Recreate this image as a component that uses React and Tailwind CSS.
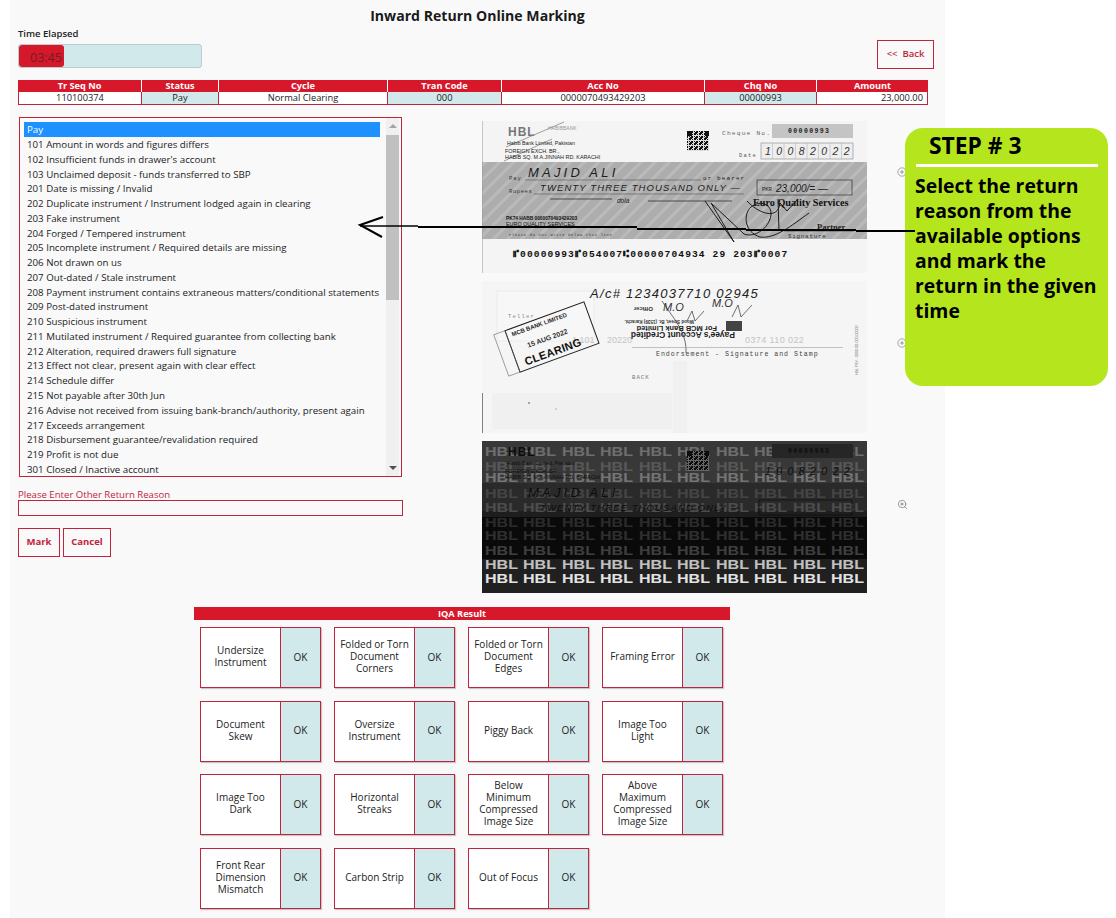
import React from "react";
import { CirclePlus, ZoomIn } from "lucide-react";

const reasons = [
  "101 Amount in words and figures differs",
  "102 Insufficient funds in drawer's account",
  "103 Unclaimed deposit - funds transferred to SBP",
  "201 Date is missing / Invalid",
  "202 Duplicate instrument / Instrument lodged again in clearing",
  "203 Fake instrument",
  "204 Forged / Tempered instrument",
  "205 Incomplete instrument / Required details are missing",
  "206 Not drawn on us",
  "207 Out-dated / Stale instrument",
  "208 Payment instrument contains extraneous matters/conditional statements",
  "209 Post-dated instrument",
  "210 Suspicious instrument",
  "211 Mutilated instrument / Required guarantee from collecting bank",
  "212 Alteration, required drawers full signature",
  "213 Effect not clear, present again with clear effect",
  "214 Schedule differ",
  "215 Not payable after 30th Jun",
  "216 Advise not received from issuing bank-branch/authority, present again",
  "217 Exceeds arrangement",
  "218 Disbursement guarantee/revalidation required",
  "219 Profit is not due",
  "301 Closed / Inactive account",
];

const iqa = [
  ["Undersize", "Instrument"],
  ["Folded or Torn", "Document", "Corners"],
  ["Folded or Torn", "Document", "Edges"],
  ["Framing Error"],
  ["Document", "Skew"],
  ["Oversize", "Instrument"],
  ["Piggy Back"],
  ["Image Too", "Light"],
  ["Image Too", "Dark"],
  ["Horizontal", "Streaks"],
  ["Below", "Minimum", "Compressed", "Image Size"],
  ["Above", "Maximum", "Compressed", "Image Size"],
  ["Front Rear", "Dimension", "Mismatch"],
  ["Carbon Strip"],
  ["Out of Focus"],
];

const columns = [
  { h: "Tr Seq No", v: "110100374", w: "w-[123px]" },
  { h: "Status", v: "Pay", w: "w-[77px]", tint: true },
  { h: "Cycle", v: "Normal Clearing", w: "w-[169px]" },
  { h: "Tran Code", v: "000", w: "w-[114px]", tint: true },
  { h: "Acc No", v: "0000070493429203", w: "w-[203px]" },
  { h: "Chq No", v: "00000993", w: "w-[112px]", tint: true },
  { h: "Amount", v: "23,000.00", w: "w-[112px]", right: true },
];

const MONO = "'Liberation Mono', monospace";
const SANS = "'Liberation Sans', sans-serif";
const SERIF = "'Liberation Serif', serif";

function QR({ x, y, dark = "#111", light = "#ddd" }) {
  const cells = [];
  for (let r = 0; r < 20; r++) {
    for (let c = 0; c < 22; c++) {
      const on = ((r * 7 + c * 13 + r * c * 3) % 5) < 3 || (r < 5 && c < 5) || (r < 5 && c > 17);
      cells.push(<rect key={r + "-" + c} x={x + c} y={y + r} width="1" height="1" fill={on ? dark : light} />);
    }
  }
  return <g>{cells}</g>;
}

function ChequeFront() {
  return (
    <svg width="385" height="152" viewBox="0 0 385 152" className="block">
      <defs>
        <pattern id="diag" width="10" height="10" patternUnits="userSpaceOnUse" patternTransform="rotate(-45)">
          <rect width="10" height="10" fill="#adadad" />
          <rect width="10" height="3" fill="#bababa" />
        </pattern>
      </defs>
      <rect width="385" height="152" fill="#f4f4f4" />
      <rect y="41" width="385" height="77" fill="url(#diag)" />
      <text x="26" y="15" fontFamily={SANS} fontWeight="700" fontSize="12" letterSpacing="1" fill="#777">HBL</text>
      <text x="66" y="9" fontFamily={SANS} fontSize="5" fill="#999">HABIBBANK</text>
      <path d="M24 26L82 1M22 40L70 18" stroke="#888" strokeWidth="0.8" fill="none" />
      <text x="25" y="24" fontFamily={SANS} fontSize="5.2" fill="#222">Habib Bank Limited, Pakistan</text>
      <text x="23" y="32" fontFamily={SANS} fontSize="5.4" fill="#222">FOREIGN EXCH. BR.,</text>
      <text x="23" y="38" fontFamily={SANS} fontSize="5.4" fill="#222">HABIB SQ. M.A.JINNAH RD. KARACHI</text>
      <QR x={205} y={10} />
      <text x="240" y="14" fontFamily={MONO} fontSize="6.2" letterSpacing="1.2" fill="#666">Cheque No.</text>
      <rect x="290" y="3" width="81" height="14" fill="#c4c4c4" />
      <text x="306" y="12" fontFamily={MONO} fontWeight="700" fontSize="6.5" letterSpacing="1.4" fill="#222">00000993</text>
      <text x="257" y="36" fontFamily={MONO} fontSize="5.5" letterSpacing="1.2" fill="#555">Date</text>
      <rect x="279" y="22" width="92" height="16" fill="#eee" stroke="#888" strokeWidth="0.6" />
      {[1, 2, 3, 4, 5, 6, 7].map((i) => (
        <line key={i} x1={279 + i * 11.5} x2={279 + i * 11.5} y1="22" y2="38" stroke="#aaa" strokeWidth="0.5" />
      ))}
      <text x="283" y="34" fontFamily={SANS} fontStyle="italic" fontSize="10.5" letterSpacing="5.4" fill="#333">10082022</text>

      <text x="27" y="59" fontFamily={MONO} fontSize="5.5" letterSpacing="1" fill="#333">Pay</text>
      <text x="46" y="56" fontFamily={SANS} fontStyle="italic" fontSize="13" letterSpacing="3.2" fill="#1c1c1c">MAJID ALI</text>
      <line x1="43" y1="59" x2="219" y2="59" stroke="#555" strokeWidth="0.6" />
      <text x="221" y="59" fontFamily={MONO} fontSize="6" letterSpacing="1.1" fill="#222">or bearer</text>
      <text x="27" y="72" fontFamily={MONO} fontSize="5.5" letterSpacing="0.6" fill="#333">Rupees</text>
      <text x="58" y="70" fontFamily={SANS} fontStyle="italic" fontSize="9.5" letterSpacing="1.1" fill="#1c1c1c">TWENTY THREE THOUSAND ONLY —</text>
      <line x1="52" y1="73" x2="262" y2="73" stroke="#555" strokeWidth="0.6" />
      <rect x="275" y="59" width="95" height="15" fill="none" stroke="#333" strokeWidth="0.7" />
      <text x="280" y="70" fontFamily={MONO} fontSize="5.5" fill="#222">PKR</text>
      <text x="294" y="71" fontFamily={SANS} fontStyle="italic" fontSize="10" fill="#1c1c1c">23,000/= —</text>
      <path d="M68 78H130M166 80H250" stroke="#333" strokeWidth="0.8" />
      <text x="135" y="82" fontFamily={SANS} fontStyle="italic" fontSize="6.5" fill="#1c1c1c">dola</text>
      <text x="271" y="85" fontFamily={SERIF} fontWeight="700" fontSize="10.2" fill="#111">Euro Quality Services</text>
      <text x="24" y="99" fontFamily={SANS} fontWeight="700" fontSize="4.8" fill="#111">PK74 HABB 0000070493429203</text>
      <text x="24" y="105" fontFamily={SANS} fontSize="5.4" fill="#111">EURO QUALITY SERVICES</text>
      <text x="27" y="115" fontFamily={MONO} fontSize="3.6" letterSpacing="0.8" fill="#333">Please do not write below this line</text>
      <text x="335" y="109" fontFamily={SERIF} fontWeight="700" fontSize="8.5" fill="#222">Partner</text>
      <line x1="302" y1="110" x2="372" y2="110" stroke="#333" strokeWidth="0.6" />
      <text x="306" y="117" fontFamily={MONO} fontSize="5.8" letterSpacing="0.8" fill="#333">Signature</text>
      <path d="M223 80L252 121L229 82L262 113C272 117 287 108 289 94C290 84 279 78 269 86C261 93 262 111 278 116C293 118 309 105 327 92M265 80C276 92 296 100 298 82L305 90L316 78M296 78L297 110"
        fill="none" stroke="#1a1a1a" strokeWidth="1" />
      <text x="31" y="136" fontFamily={MONO} fontWeight="700" fontSize="9.6" letterSpacing="1.1" fill="#111">⑈00000993⑈054007⑆00000704934 29 203⑈0007</text>
      <line x1="0.5" y1="0" x2="0.5" y2="152" stroke="#999" strokeWidth="0.5" />
    </svg>
  );
}

function ChequeBack() {
  return (
    <svg width="385" height="152" viewBox="0 0 385 152" className="block">
      <rect width="385" height="152" fill="#f5f5f5" />
      <rect x="10" y="112" width="180" height="36" fill="#f0f0f0" />
      <rect x="191" y="80" width="14" height="72" fill="#f0f0f0" />
      <rect x="15" y="10" width="97" height="50" fill="#f7f7f7" stroke="#e4e4e4" strokeWidth="0.6" />
      <text x="26" y="37" fontFamily={MONO} fontSize="5.5" letterSpacing="1.2" fill="#888">Teller</text>
      <text x="90" y="62" fontFamily={SANS} fontSize="9" fill="#c4c4c4">1 101</text>
      <text x="125" y="62" fontFamily={SANS} fontSize="9" fill="#c4c4c4">20220</text>
      <text x="263" y="62" fontFamily={SANS} fontSize="9" letterSpacing="0.4" fill="#c4c4c4">0374  110  022</text>
      <text x="108" y="17" fontFamily={SANS} fontStyle="italic" fontSize="13" letterSpacing="1.3" fill="#222">A/c# 1234037710 02945</text>
      <g transform="rotate(-20 70 56)">
        <rect x="28" y="34" width="84" height="44" fill="none" stroke="#222" strokeWidth="1" />
        <rect x="16" y="34" width="12" height="44" fill="none" stroke="#555" strokeWidth="0.5" />
        <text x="33" y="42" fontFamily={SANS} fontWeight="700" fontSize="6" fill="#222">MCB BANK LIMITED</text>
        <text x="44" y="58" fontFamily={SANS} fontWeight="700" fontSize="7" fill="#333">15 AUG 2022</text>
        <text x="36" y="74" fontFamily={SANS} fontWeight="700" fontSize="11" letterSpacing="0.3" fill="#111">CLEARING</text>
      </g>
      <g transform="rotate(180 201 42)">
        <text x="149" y="33" fontFamily={SANS} fontWeight="700" fontSize="8.5" fill="#222">Payee's Account Credited</text>
        <text x="167" y="39.5" fontFamily={SANS} fontWeight="700" fontSize="7.5" fill="#222">For MCB Bank Limited</text>
        <text x="190" y="45" fontFamily={SANS} fontWeight="700" fontSize="4.6" fill="#333">Wood Street, Br. (1539) Karachi.</text>
        <text x="231" y="58" fontFamily={SANS} fontWeight="700" fontSize="6" fill="#333">Officer</text>
      </g>
      <text x="181" y="30" fontFamily={SANS} fontStyle="italic" fontSize="11" fill="#333">M.O</text>
      <text x="230" y="26" fontFamily={SANS} fontStyle="italic" fontSize="11" fill="#333">M.O</text>
      <path d="M205 40L210 30L213 40L222 30M250 36L256 24L259 36L270 24M180 20C190 36 205 50 204 72" fill="none" stroke="#333" strokeWidth="0.7" />
      <rect x="244" y="40" width="16" height="10" fill="#444" />
      <line x1="150" y1="66.5" x2="361" y2="66.5" stroke="#aaa" strokeWidth="0.7" />
      <text x="174" y="75" fontFamily={MONO} fontSize="6.6" letterSpacing="0.97" fill="#444">Endorsement - Signature and Stamp</text>
      <text x="150" y="98" fontFamily={MONO} fontSize="5.8" letterSpacing="0.9" fill="#777">BACK</text>
      <text x="376" y="94" transform="rotate(-90 376 94)" fontFamily={SANS} fontSize="3.6" fill="#666">HBL FSV - 0000-00-000-00000</text>
      <line x1="0.5" y1="112" x2="0.5" y2="152" stroke="#333" strokeWidth="0.6" />
      <circle cx="47" cy="122" r="0.7" fill="#222" />
      <circle cx="74" cy="128" r="0.5" fill="#444" />
    </svg>
  );
}

function ChequeUv() {
  const rows = [
    [15, "#6e6e6e"], [30, "#585858"], [41, "#747474"], [57, "#454545"], [71, "#4d4d4d"],
    [86, "#2c2c2c"], [99, "#2f2f2f"], [114, "#3f3f3f"], [128, "#c0c0c0"], [142, "#e2e2e2"],
  ];
  const cols = [3, 41, 80, 118, 157, 195, 234, 272, 311, 349];
  return (
    <svg width="385" height="152" viewBox="0 0 385 152" className="block">
      <rect width="385" height="152" fill="#1e1e1e" />
      <rect y="0" width="385" height="42" fill="#383838" />
      <rect y="42" width="385" height="28" fill="#2a2a2a" />
      <rect y="76" width="385" height="42" fill="#0a0a0a" />
      <rect y="118" width="385" height="34" fill="#202020" />
      {rows.map(([y, c]) => cols.map((x) => (
        <text key={y + "-" + x} x={x} y={y} fontFamily={SANS} fontWeight="700" fontSize="12" textLength="33" lengthAdjust="spacingAndGlyphs" fill={c}>HBL</text>
      )))}
      <rect x="290" y="3" width="81" height="14" fill="#262626" />
      <text x="306" y="12" fontFamily={MONO} fontWeight="700" fontSize="6.5" letterSpacing="1.4" fill="#0c0c0c">00000993</text>
      <text x="26" y="15" fontFamily={SANS} fontWeight="700" fontSize="12" letterSpacing="1" fill="#0c0c0c">HBL</text>
      <text x="25" y="24" fontFamily={SANS} fontSize="5.2" fill="#0c0c0c">Habib Bank Limited, Pakistan</text>
      <text x="23" y="32" fontFamily={SANS} fontSize="5.4" fill="#0c0c0c">FOREIGN EXCH. BR.,</text>
      <text x="23" y="38" fontFamily={SANS} fontSize="5.4" fill="#0c0c0c">HABIB SQ. M.A.JINNAH RD. KARACHI</text>
      <QR x={205} y={10} dark="#0c0c0c" light="#666" />
      <text x="283" y="34" fontFamily={SANS} fontStyle="italic" fontSize="10.5" letterSpacing="5.4" fill="#0c0c0c">10082022</text>
      <text x="46" y="56" fontFamily={SANS} fontStyle="italic" fontSize="13" letterSpacing="3.2" fill="#0c0c0c">MAJID ALI</text>
      <text x="58" y="70" fontFamily={SANS} fontStyle="italic" fontSize="9.5" letterSpacing="1.1" fill="#0c0c0c">TWENTY THREE THOUSAND ONLY —</text>
      <rect x="277" y="59" width="93" height="15" fill="none" stroke="#0c0c0c" strokeWidth="0.7" />
    </svg>
  );
}

function Cheque({ children, iconTop, icon }) {
  return (
    <div className="flex h-[152px]">
      <div className="w-[385px] h-[152px] shrink-0">{children}</div>
      <div className="ml-[30px] text-[#333]" style={{ marginTop: iconTop }}>{icon}</div>
    </div>
  );
}

function IqaCard({ lines }) {
  return (
    <div className="flex h-[61px] border border-[#c0243c] bg-white shadow-[1px_1px_1px_rgba(0,0,0,0.2)]">
      <div className="w-[79px] pb-[3px] flex flex-col items-center justify-center text-[10px] leading-[12px] text-[#222]">
        {lines.map((l) => <span key={l}>{l}</span>)}
      </div>
      <div className="flex-1 pb-[1px] flex items-center justify-center border-l border-[#c0243c] bg-[#d2e9ec] text-[10px] text-[#222]">OK</div>
    </div>
  );
}

export default function App() {
  return (
    <div className="relative w-[1116px] h-[918px] overflow-hidden bg-white font-['Open_Sans','Noto_Sans',sans-serif]">
      <div className="ml-[10px] w-[935px] h-[918px] bg-[#f9f9fa] pl-[8px] pt-[6px]">
        <h1 className="h-[22px] -ml-[8px] text-center text-[14.1px] leading-[20px] font-bold text-[#1a1a1a]">Inward Return Online Marking</h1>

        <div className="flex justify-between w-[916px]">
          <div>
            <div className="h-[16px] text-[9.5px] leading-[11px] font-semibold text-[#222]">Time Elapsed</div>
            <div className="relative w-[184px] h-[24px] rounded-[3px] border border-[#b9cdd0] bg-[#d2e9ec] overflow-hidden">
              <div className="w-[45px] h-full rounded-[3px] bg-[#d7182a] text-[#6d1f2a] text-[12.5px] leading-[25px] pl-[11px] whitespace-nowrap overflow-hidden">03:45</div>
            </div>
          </div>
          <button className="mt-[12px] w-[57px] h-[29px] border border-[#c0243c] text-[9.5px] font-semibold text-[#c0243c]">&lt;&lt;&nbsp; Back</button>
        </div>

        <div className="mt-[11px] w-[910px] flex border-b border-[#c0243c]">
          {columns.map((c, i) => (
            <div key={c.h} className={c.w + " flex flex-col"}>
              <div className={"h-[12px] bg-[#d7182a] text-white text-[9.2px] leading-[12px] font-bold text-center" + (i > 0 ? " border-l border-white" : "")}>{c.h}</div>
              <div className={"h-[12px] text-[9.3px] leading-[12px] text-[#222] border-l border-[#c0243c]" + (c.tint ? " bg-[#d2e9ec]" : " bg-white") + (c.right ? " text-right pr-[4px] border-r" : " text-center")}>{c.v}</div>
            </div>
          ))}
        </div>

        <div className="flex mt-[12px]">
          <div className="w-[385px] shrink-0">
            <div className="ml-px w-[383px] h-[360px] border border-[#c0243c] flex pl-[4px] pt-[4px] overflow-hidden">
              <div className="w-[356px] shrink-0 text-[9.72px] leading-[14.77px] text-[#222]">
                <div className="h-[15px] bg-[#1e90ff] text-white pl-[3px] pt-px">Pay</div>
                <div className="pt-px">
                  {reasons.map((r) => <div key={r} className="pl-[3px] whitespace-nowrap">{r}</div>)}
                </div>
              </div>
              <div className="ml-[6px] -mt-[4px] w-[13px] h-[358px] bg-[#f0f0f0] flex flex-col items-center">
                <div className="h-[17px] pt-[6px]"><div className="w-0 h-0 border-x-[4px] border-x-transparent border-b-[4px] border-b-[#a3a3a3]" /></div>
                <div className="w-full h-[165px] bg-[#c0c0c0]" />
                <div className="mt-auto mb-[6px] w-0 h-0 border-x-[4px] border-x-transparent border-t-[4px] border-t-[#505050]" />
              </div>
            </div>
            <div className="mt-[12px] h-[11px] text-[9.6px] leading-[12px] text-[#c0243c] whitespace-nowrap">Please Enter Other Return Reason</div>
            <div className="h-[16px] border border-[#c0243c]" />
            <div className="mt-[12px] flex gap-[3px]">
              <button className="w-[42px] h-[29px] border border-[#c0243c] text-[9.5px] font-bold text-[#c0243c]">Mark</button>
              <button className="w-[48px] h-[29px] border border-[#c0243c] text-[9.5px] font-bold text-[#c0243c]">Cancel</button>
            </div>
          </div>

          <div className="ml-[79px] mt-[4px] flex flex-col gap-[8px]">
            <Cheque iconTop={46} icon={<CirclePlus size={10} strokeWidth={1} />}><ChequeFront /></Cheque>
            <Cheque iconTop={57} icon={<CirclePlus size={10} strokeWidth={1} />}><ChequeBack /></Cheque>
            <Cheque iconTop={58} icon={<ZoomIn size={11} strokeWidth={1} />}><ChequeUv /></Cheque>
          </div>
        </div>

        <div className="mt-[14px] ml-[176px] w-[536px] h-[13px] bg-[#d7182a] text-center text-white text-[9.2px] leading-[13px] font-bold">IQA Result</div>
        <div className="mt-[7px] ml-[182px] grid grid-cols-[repeat(4,121px)] gap-x-[13px] gap-y-[12.67px]">
          {iqa.map((lines) => <IqaCard key={lines.join(" ")} lines={lines} />)}
        </div>
      </div>

      <div className="absolute left-[905px] top-[128px] w-[203px] h-[258px] rounded-[18px] bg-[#b5e61d] text-black">
        <div className="ml-[24px] text-[22.8px] leading-[36px] font-bold whitespace-nowrap">STEP # 3</div>
        <div className="ml-[11px] w-[182px] h-[3px] bg-white" />
        <div className="ml-[10px] mt-[6px] text-[19.4px] leading-[25px] font-bold w-[190px]">Select the return reason from the available options and mark the return in the given time</div>
      </div>

      <svg className="absolute left-0 top-0 pointer-events-none" width="1116" height="918" fill="none">
        <path d="M360 226H418" stroke="#000" strokeWidth="1.5" />
        <path d="M418 227H637M637 229H746M746 230H856M856 231H915" stroke="#000" strokeWidth="2" />
        <path d="M383 217L360 225L382 237" stroke="#000" strokeWidth="2" />
      </svg>
    </div>
  );
}
